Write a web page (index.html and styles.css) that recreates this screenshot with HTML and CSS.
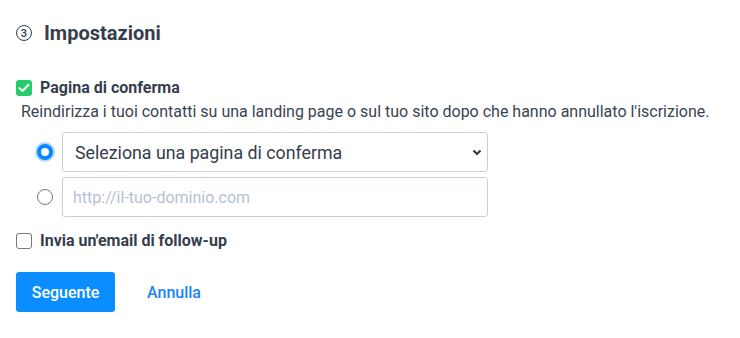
FILE: index.html
```html
<!DOCTYPE html>
<html lang="it">
<head>
    <meta charset="UTF-8">
    <meta name="viewport" content="width=device-width, initial-scale=1.0">
    <title>Impostazioni</title>
    <link rel="stylesheet" href="styles.css">
</head>
<body>
    <h2 class="section-title">
        <span class="step-number">3</span>
        Impostazioni
    </h2>

    <label class="check-row">
        <span class="check-box checked">
            <svg width="12" height="10" viewBox="0 0 12 10"><path d="M1.5 5.2 L4.5 8 L10.5 1.8" fill="none" stroke="#fff" stroke-width="2" stroke-linecap="round" stroke-linejoin="round"/></svg>
        </span>
        Pagina di conferma
    </label>
    <p class="description">Reindirizza i tuoi contatti su una landing page o sul tuo sito dopo che hanno annullato l'iscrizione.</p>

    <div class="choices">
        <div class="choice-row">
            <span class="radio selected"></span>
            <div class="select-wrap">
                <select class="field">
                    <option>Seleziona una pagina di conferma</option>
                </select>
                <svg class="chevron" width="10" height="7" viewBox="0 0 10 7"><path d="M1.5 1.5 L5 5 L8.5 1.5" fill="none" stroke="#2f3a4a" stroke-width="2.2"/></svg>
            </div>
        </div>
        <div class="choice-row">
            <span class="radio"></span>
            <input class="field" type="text" placeholder="http://il-tuo-dominio.com">
        </div>
    </div>

    <label class="check-row second">
        <span class="check-box"></span>
        Invia un'email di follow-up
    </label>

    <div class="actions">
        <button type="button" class="primary-button">Seguente</button>
        <a href="#" class="cancel-link">Annulla</a>
    </div>
</body>
</html>
```

FILE: styles.css
```css
body {
    font-family: Roboto, "Liberation Sans", sans-serif;
    margin: 0;
    padding: 20px 16px;
    color: #343d4c;
    background: #fff;
}

.section-title {
    display: flex;
    align-items: center;
    margin: 0;
    font-size: 20px;
    line-height: 26px;
    font-weight: 700;
    color: #353e4d;
}

.step-number {
    display: inline-flex;
    justify-content: center;
    align-items: center;
    box-sizing: border-box;
    width: 16px;
    height: 16px;
    margin-right: 12px;
    border: 1.5px solid #353e4d;
    border-radius: 50%;
    font-size: 11px;
    font-weight: 500;
    line-height: 1;
}

.check-row {
    display: flex;
    align-items: center;
    margin-top: 34px;
    font-size: 16px;
    font-weight: 700;
    line-height: 16px;
    color: #353e4d;
}

.check-row.second {
    margin-top: 16px;
}

.check-box {
    display: inline-flex;
    justify-content: center;
    align-items: center;
    box-sizing: border-box;
    width: 16px;
    height: 16px;
    margin-right: 8px;
    border: 1px solid #6f7786;
    border-radius: 3px;
    background: #fff;
}

.check-box.checked {
    border: none;
    background: #26cc6b;
}

.description {
    margin: 6px 0 0;
    padding-left: 5px;
    font-size: 16px;
    line-height: 20px;
    color: #3a4351;
}

.choices {
    display: flex;
    flex-direction: column;
    gap: 5px;
    margin-top: 10px;
    padding-left: 21px;
}

.choice-row {
    display: flex;
    align-items: center;
}

.radio {
    box-sizing: border-box;
    width: 16px;
    height: 16px;
    margin-right: 9px;
    border: 1px solid #6f7786;
    border-radius: 50%;
    background: #fff;
}

.radio.selected {
    border: 4px solid #0a84ff;
    box-shadow: 0 0 0 2px rgba(10, 132, 255, 0.3);
}

.select-wrap {
    position: relative;
}

.field {
    box-sizing: border-box;
    width: 426px;
    height: 40px;
    margin: 0;
    padding: 0 10px;
    border: 1px solid #c6d0dd;
    border-radius: 3px;
    background: #fff;
    font-family: Roboto, "Liberation Sans", sans-serif;
    font-size: 16px;
    color: #343d4c;
    outline: none;
}

select.field {
    appearance: none;
    -webkit-appearance: none;
    padding-left: 12px;
    font-size: 17.8px;
}

.field::placeholder {
    color: #b6c2d1;
}

.chevron {
    position: absolute;
    right: 6px;
    top: 17px;
    pointer-events: none;
}

.actions {
    display: flex;
    align-items: center;
    margin-top: 23px;
}

.primary-button {
    width: 99px;
    height: 40px;
    border: none;
    border-radius: 3px;
    background: #0a8dff;
    color: #fff;
    font-family: Roboto, "Liberation Sans", sans-serif;
    font-size: 16px;
    font-weight: 500;
    cursor: pointer;
}

.cancel-link {
    margin-left: 32px;
    font-size: 16px;
    font-weight: 500;
    color: #1a82ff;
    text-decoration: none;
}
```
